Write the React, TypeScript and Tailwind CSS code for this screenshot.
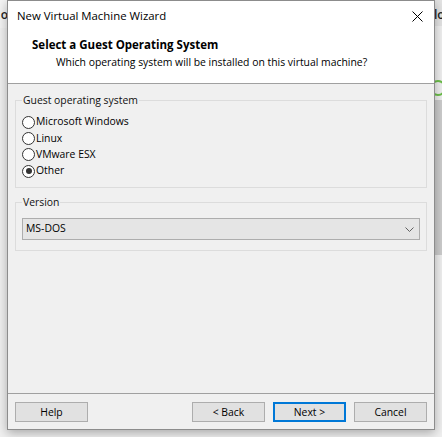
import React, { useState } from "react";

const options = ["Microsoft Windows", "Linux", "VMware ESX", "Other"];

function Radio({ label, checked, onSelect }: { label: string; checked: boolean; onSelect: () => void }) {
  return (
    <label className="flex h-[16.3px] items-center cursor-default" onClick={onSelect}>
      <span className="flex h-[13px] w-[13px] items-center justify-center rounded-full border border-[#333] bg-white">
        {checked && <span className="h-[6px] w-[6px] rounded-full bg-[#333]" />}
      </span>
      <span className="ml-[1px]">{label}</span>
    </label>
  );
}

function WinButton({ children, primary }: { children: React.ReactNode; primary?: boolean }) {
  return (
    <button
      className={
        primary
          ? "h-[20px] w-[73px] border-2 border-[#0078d7] bg-[#e1e1e1] leading-none"
          : "h-[20px] w-[73px] border border-[#adadad] bg-[#e1e1e1] leading-none"
      }
    >
      {children}
    </button>
  );
}

export default function App() {
  const [os, setOs] = useState("Other");

  return (
    <div className="relative h-[437px] w-[442px] overflow-hidden bg-[#f0f0f0] text-[10.4px] text-black [font-family:'Open_Sans','Noto_Sans',sans-serif]">
      {/* app behind the dialog */}
      <div className="absolute left-0 top-0 h-[28px] w-[8px] overflow-hidden bg-[#f4f4f4]">
        <span className="absolute right-0 top-[6px] text-[12px] font-semibold text-[#222]">o</span>
      </div>
      <div className="absolute right-0 top-0 h-[26px] w-[8px] overflow-hidden bg-[#e4e4e4]">
        <span className="absolute left-0 top-[6px] text-[12px] font-semibold text-[#222]">lo</span>
      </div>
      <div className="absolute right-[-4px] top-[80px] h-[16px] w-[16px] rounded-full border-2 border-[#6cbf4a]" />
      <div className="absolute right-0 top-[100px] h-[155px] w-[8px] bg-[#cdcdcd]" />

      {/* dialog */}
      <div className="absolute left-[7px] top-0 flex h-[430px] w-[428px] flex-col border border-[#8c8c8c] bg-[#f0f0f0] shadow-[0_3px_10px_rgba(0,0,0,0.3)]">
        <div className="bg-white">
          <div className="flex h-[30px] items-center justify-between pl-[9px] pr-[11px]">
            <span className="text-[11.4px]">New Virtual Machine Wizard</span>
            <svg width="11" height="11" viewBox="0 0 11 11" className="text-black">
              <path d="M0.5 0.5 L10.5 10.5 M10.5 0.5 L0.5 10.5" stroke="currentColor" strokeWidth="1" />
            </svg>
          </div>
          <div className="h-[52px] pl-[24px] pt-[6px]">
            <div className="text-[11.5px] font-bold leading-[16px]">Select a Guest Operating System</div>
            <div className="mt-[1px] pl-[24px] leading-[16px]">Which operating system will be installed on this virtual machine?</div>
          </div>
        </div>
        <div className="h-px bg-[#a0a0a0]" />

        <div className="flex-1 px-[7px] pt-[8px]">
          <fieldset className="border border-[#dcdcdc] px-[6px] pb-[8px] pt-[6px]">
            <legend className="px-[1px] leading-[16px] text-[#111]">Guest operating system</legend>
            {options.map((o) => (
              <Radio key={o} label={o} checked={os === o} onSelect={() => setOs(o)} />
            ))}
          </fieldset>

          <fieldset className="mt-[6px] border border-[#dcdcdc] px-[6px] pb-[10px] pt-[8px]">
            <legend className="px-[1px] leading-[16px] text-[#111]">Version</legend>
            <div className="flex h-[22px] items-center justify-between border border-[#adadad] bg-[#e5e5e5] pl-[3px] pr-[5px]">
              <span>MS-DOS</span>
              <svg width="9" height="5" viewBox="0 0 9 5">
                <path d="M0.5 0.5 L4.5 4.5 L8.5 0.5" fill="none" stroke="#606060" strokeWidth="1" />
              </svg>
            </div>
          </fieldset>
        </div>

        <div className="h-px bg-[#a0a0a0]" />
        <div className="flex h-[35px] items-start px-[7px] pt-[8px]">
          <WinButton>Help</WinButton>
          <div className="flex-1" />
          <div className="flex gap-[8px]">
            <WinButton>&lt; Back</WinButton>
            <WinButton primary>Next &gt;</WinButton>
            <WinButton>Cancel</WinButton>
          </div>
        </div>
      </div>
    </div>
  );
}
